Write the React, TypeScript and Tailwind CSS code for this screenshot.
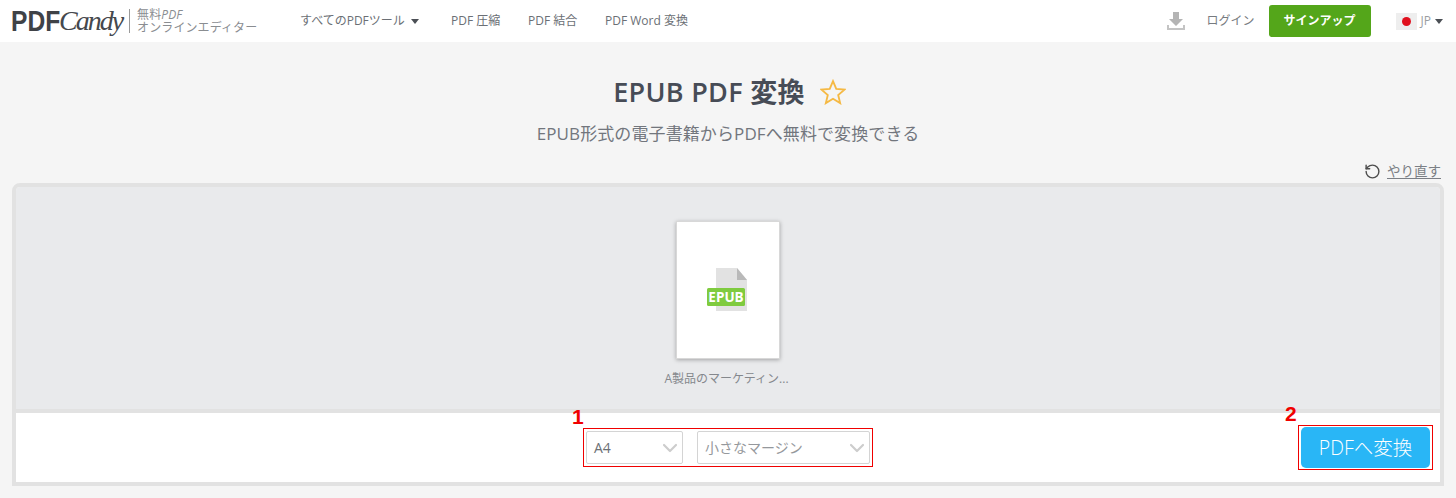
import React from 'react';
import { ChevronDown, RotateCw } from 'lucide-react';

const font = { fontFamily: '"Open Sans", "Noto Sans CJK JP", sans-serif' };

const EpubIcon = () => (
  <svg width="40" height="44" viewBox="0 0 40 44" className="-ml-[2px]">
    <path d="M9 0h21l10 12v31H9z" fill="#e2e2e2" />
    <path d="M30 0l10 12H30z" fill="#b9b9b9" />
    <rect x="0" y="20" width="38" height="18" rx="1.5" fill="#7fcb3f" />
    <text x="19" y="34" textAnchor="middle" fontSize="13.5" fontWeight="700" fill="#fff" fontFamily="Open Sans">EPUB</text>
  </svg>
);

const Select = ({ label, className, textClass }: { label: string; className: string; textClass: string }) => (
  <div className={`h-[33px] bg-white border border-[#d4d4d4] rounded-[2px] flex items-center justify-between pl-[7px] overflow-hidden ${className}`}>
    <span className={`text-[14px] ${textClass}`}>{label}</span>
    <ChevronDown size={24} strokeWidth={2.2} className="text-[#cdcdcd] shrink-0" />
  </div>
);

export default function App() {
  return (
    <div style={font} className="h-[498px] w-[1456px] overflow-hidden bg-[#f5f5f5] flex flex-col">
      {/* Top navbar */}
      <header className="h-[42px] bg-white flex items-center shrink-0 text-[#6b6f75] text-[12px]">
        <div className="flex items-center w-[300px] pl-[11px]">
          <span className="inline-block w-[48px] text-[30px] font-bold text-[#3f4247] leading-none origin-left scale-x-[0.82]" style={{ fontFamily: '"Liberation Sans", sans-serif' }}>PDF</span>
          <span className="text-[28px] italic text-[#45484d] leading-none tracking-[-2px]" style={{ fontFamily: '"Liberation Serif", serif' }}>Candy</span>
          <div className="w-px h-[24px] bg-[#9a9a9a] ml-[7px] mr-[7px]" />
          <div className="text-[12px] leading-[13px] text-[#8a8d91] tracking-[0.1px]">
            <div className="flex"><span>無料</span><i>PDF</i></div>
            <div className="whitespace-nowrap">オンラインエディター</div>
          </div>
        </div>
        <nav className="flex items-center">
          <span className="w-[151px] flex items-center gap-[6px]">
            すべてのPDFツール
            <span className="w-0 h-0 border-l-[4px] border-r-[4px] border-t-[5px] border-l-transparent border-r-transparent border-t-[#4b4f55]" />
          </span>
          <span className="w-[77px]">PDF 圧縮</span>
          <span className="w-[77px]">PDF 結合</span>
          <span>PDF Word 変換</span>
        </nav>
        <div className="ml-auto flex items-center pr-[13px]">
          <svg width="20" height="20" viewBox="0 0 20 20" className="mr-[21px]">
            <path d="M7 1h6v7h4l-7 7-7-7h4z" fill="#b4b4b4" />
            <path d="M1 14v5h18v-5h-2v3H3v-3z" fill="#c4c4c4" />
          </svg>
          <span className="mr-[14px] text-[#777b80]">ログイン</span>
          <button className="w-[102px] h-[32px] rounded-[3px] bg-[#54a61a] text-white font-bold text-[12px] mr-[25px]">サインアップ</button>
          <div className="w-[21px] h-[17px] bg-[#eeeeee] flex items-center justify-center mr-[4px]">
            <div className="w-[9px] h-[9px] rounded-full bg-[#e0101e]" />
          </div>
          <span className="text-[#9a9da1] mr-[4px]">JP</span>
          <span className="w-0 h-0 border-l-[4px] border-r-[4px] border-t-[5px] border-l-transparent border-r-transparent border-t-[#4b4f55]" />
        </div>
      </header>

      {/* Title */}
      <div className="flex items-center justify-center gap-[15px] mt-[31px] h-[38px] pl-[3px]">
        <h1 className="text-[27px] font-semibold text-[#474c56] tracking-[0.3px]">EPUB PDF 変換</h1>
        <svg width="26" height="26" viewBox="0 0 24 24" fill="none" stroke="#f5b944" strokeWidth="1.7" strokeLinejoin="miter">
          <path d="M12 2l3 7.2 7.6.6-5.8 5 1.8 7.5L12 18.3l-6.6 4 1.8-7.5-5.8-5L9 9.2z" />
        </svg>
      </div>
      <p className="text-center text-[17px] text-[#72767d] mt-[10px] h-[26px] leading-[26px] tracking-[0.1px]">EPUB形式の電子書籍からPDFへ無料で変換できる</p>

      {/* Redo link */}
      <div className="flex justify-end items-center gap-[6px] pr-[15px] mt-[15px] h-[18px]">
        <RotateCw size={17} strokeWidth={2} className="text-[#4d4d4d] -scale-x-100" />
        <span className="text-[13.5px] text-[#7b7f85] underline underline-offset-2">やり直す</span>
      </div>

      {/* Main panel */}
      <main className="mx-[12px] mt-[3px] h-[303px] border-[4px] border-[#e2e2e2] rounded-t-[8px] flex flex-col overflow-hidden">
        <section className="h-[222px] bg-[#e9eaec] flex flex-col items-center shrink-0 pt-[34px]">
          <div className="w-[104px] h-[138px] bg-white border border-[#d8d8d8] shadow-[0_1px_4px_rgba(0,0,0,0.3)] flex items-center justify-center">
            <EpubIcon />
          </div>
          <span className="mt-[11px] -ml-[3px] text-[12px] text-[#85888d] leading-[18px]">A製品のマーケティン...</span>
        </section>
        <section className="flex-1 bg-white border-t-[4px] border-[#e2e2e2] flex items-center relative">
          <div className="absolute left-[567px] top-[15px] w-[290px] h-[39px] border border-[#f00000] flex items-center gap-[14px] px-[2px]">
            <span className="absolute left-[-12px] top-[-23px] text-[21px] leading-[22px] font-bold text-[#f00000]" style={{ fontFamily: '"Liberation Sans", sans-serif' }}>1</span>
            <Select label="A4" className="w-[97px]" textClass="text-[#6c7075]" />
            <Select label="小さなマージン" className="w-[173px]" textClass="text-[#95989c]" />
          </div>
          <div className="absolute left-[1282px] top-[12px] w-[135px] h-[45px] border border-[#f00000] flex items-center justify-center">
            <span className="absolute left-[-14px] top-[-23px] text-[21px] leading-[22px] font-bold text-[#f00000]" style={{ fontFamily: '"Liberation Sans", sans-serif' }}>2</span>
            <button className="w-[129px] h-[41px] rounded-[5px] bg-[#29b6f6] text-white text-[19.5px] font-light">PDFへ変換</button>
          </div>
        </section>
      </main>
    </div>
  );
}
